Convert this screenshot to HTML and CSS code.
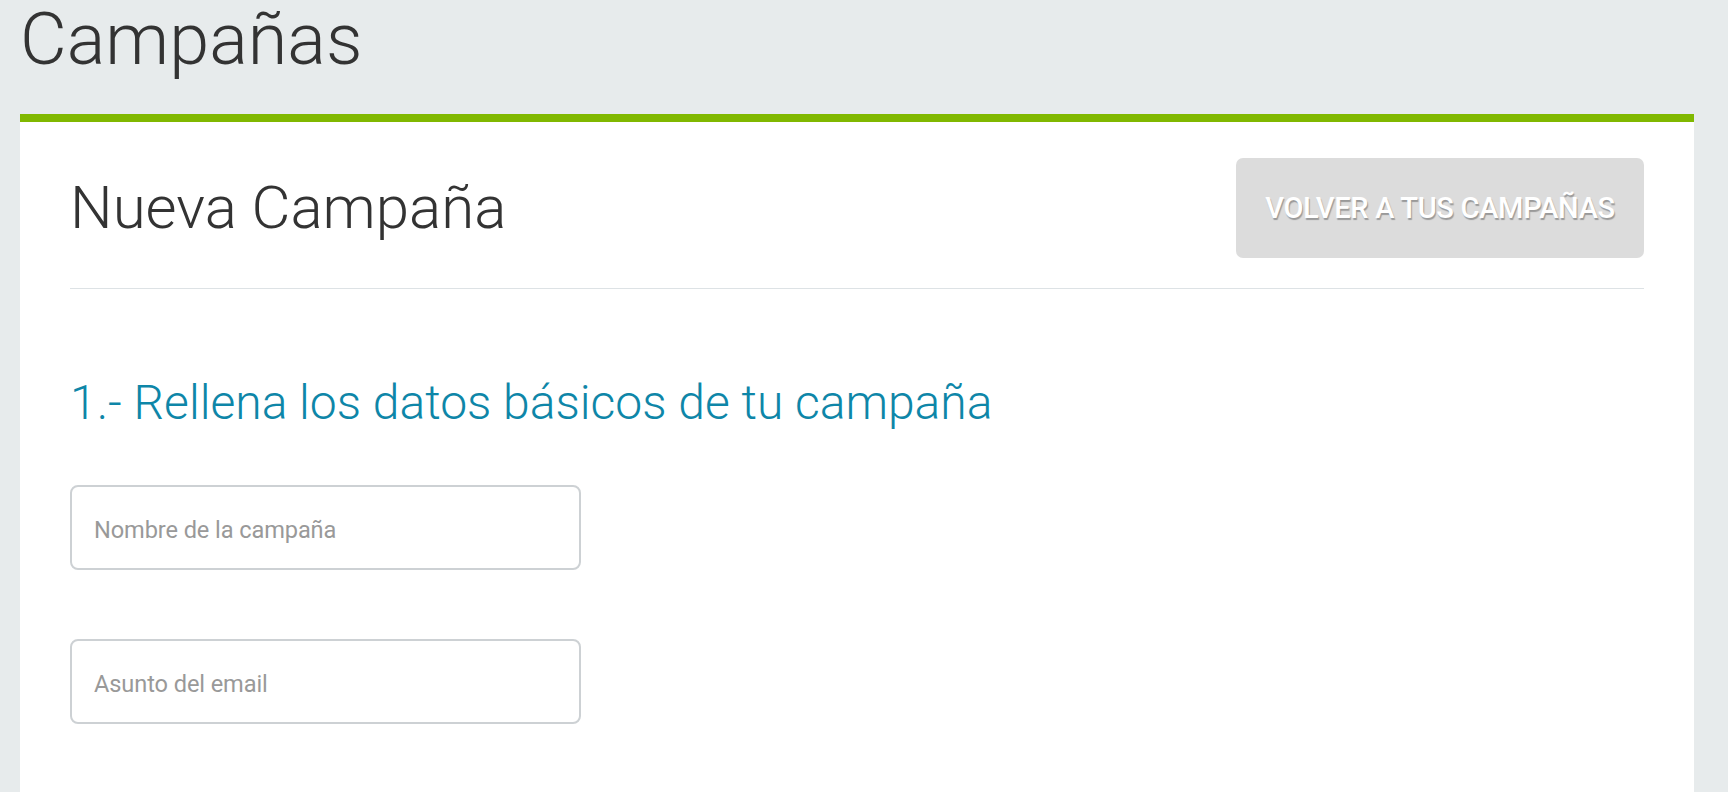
FILE: index.html
```html
<!DOCTYPE html>
<html lang="es">
<head>
<meta charset="utf-8">
<title>Campañas</title>
<link rel="stylesheet" href="styles.css">
</head>
<body>
<div class="page">
  <h1 class="page-title">Campañas</h1>
  <section class="card">
    <header class="card-header">
      <h2 class="card-title">Nueva Campaña</h2>
      <a class="btn-back" href="#">VOLVER A TUS CAMPAÑAS</a>
    </header>
    <h3 class="step-title">1.- Rellena los datos básicos de tu campaña</h3>
    <form class="form">
      <input class="field" type="text" placeholder="Nombre de la campaña">
      <input class="field" type="text" placeholder="Asunto del email">
    </form>
  </section>
</div>
</body>
</html>
```

FILE: styles.css
```css
html, body {
  margin: 0;
  padding: 0;
  height: 100%;
}
body {
  background: #e7ebec;
  font-family: Roboto, "Liberation Sans", sans-serif;
  overflow: hidden;
}
.page {
  display: flex;
  flex-direction: column;
  height: 100%;
  box-sizing: border-box;
  padding: 0 34px 0 20px;
}
.page-title {
  margin: 0;
  flex: 0 0 114px;
  font-size: 72px;
  font-weight: 300;
  color: #333;
  line-height: 80px;
}
.card {
  flex: 1;
  background: #fff;
  border-top: 8px solid #80b800;
  padding: 0 50px;
}
.card-header {
  display: flex;
  justify-content: space-between;
  align-items: center;
  padding: 36px 0 30px;
  border-bottom: 1px solid #dde2e5;
}
.card-title {
  margin: 0;
  font-size: 60px;
  font-weight: 300;
  color: #333;
  line-height: 1.2;
}
.btn-back {
  display: flex;
  align-items: center;
  justify-content: center;
  width: 408px;
  height: 100px;
  background: #dcdcdc;
  border-radius: 7px;
  color: #fff;
  text-decoration: none;
  font-size: 29px;
  font-weight: 500;
  letter-spacing: -0.3px;
  text-shadow: 1px 2px 1px rgba(0, 0, 0, 0.3);
}
.step-title {
  margin: 85px 0 0;
  font-size: 48px;
  font-weight: 300;
  color: #0e86a8;
  line-height: 1.2;
}
.form {
  display: flex;
  flex-direction: column;
  gap: 69px;
  margin-top: 53px;
}
.field {
  box-sizing: border-box;
  width: 511px;
  height: 85px;
  border: 2px solid #cdd1d4;
  border-radius: 8px;
  padding: 6px 22px 0;
  font-family: Roboto, "Liberation Sans", sans-serif;
  font-size: 23.6px;
  font-weight: 400;
  letter-spacing: -0.1px;
  color: #333;
  outline: none;
}
.field::placeholder {
  color: #999;
}
```
